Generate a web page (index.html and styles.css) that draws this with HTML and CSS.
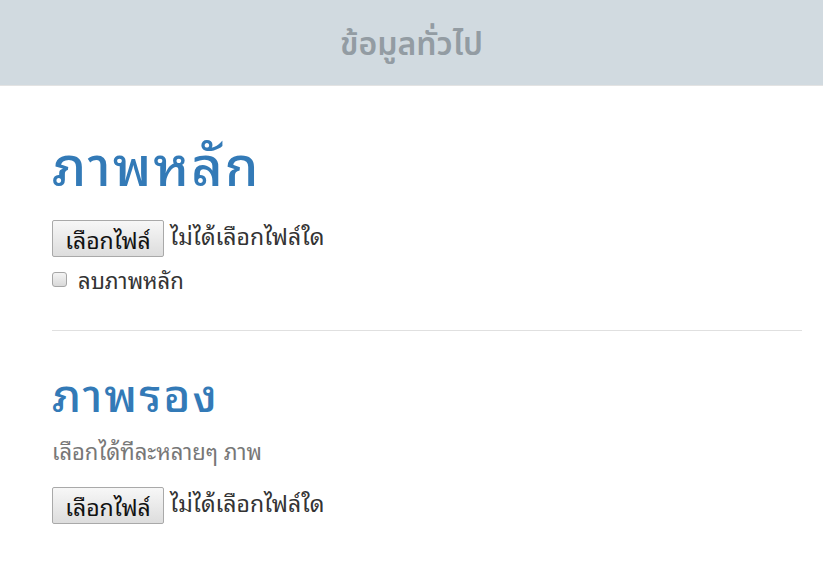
FILE: index.html
```html
<!DOCTYPE html>
<html lang="th">
<head>
    <meta charset="UTF-8">
    <title>ข้อมูลทั่วไป</title>
    <link rel="stylesheet" href="styles.css">
</head>
<body>
    <div class="page-header">
        <h3>ข้อมูลทั่วไป</h3>
    </div>

    <div class="container">
        <div class="section">
            <h1>ภาพหลัก</h1>
            <div class="file-input">
                <button type="button" class="file-btn">เลือกไฟล์</button>
                <span class="file-name">ไม่ได้เลือกไฟล์ใด</span>
            </div>
            <label class="checkbox">
                <input type="checkbox" name="remove_main">
                ลบภาพหลัก
            </label>
        </div>

        <hr>

        <div class="section">
            <h2>ภาพรอง</h2>
            <p class="help">เลือกได้ทีละหลายๆ ภาพ</p>
            <div class="file-input">
                <button type="button" class="file-btn">เลือกไฟล์</button>
                <span class="file-name">ไม่ได้เลือกไฟล์ใด</span>
            </div>
        </div>
    </div>
</body>
</html>
```

FILE: styles.css
```css
body {
    margin: 0;
    font-family: "Noto Sans Thai Looped", "Noto Sans", sans-serif;
    font-size: 22px;
    line-height: 1.4;
    color: #333;
    background: white;
}

.page-header {
    background: #d1dae0;
    height: 85px;
    border-bottom: 1px solid #e3e3e3;
    display: flex;
    align-items: center;
    justify-content: center;
}

.page-header h3 {
    margin: 0;
    padding-top: 6px;
    font-family: "Noto Sans Thai", "Noto Sans", sans-serif;
    font-size: 32px;
    font-weight: 600;
    color: #939ca3;
}

.container {
    padding: 0 21px 0 52px;
}

h1, h2 {
    color: #337ab7;
    font-weight: 500;
    line-height: 1.2;
    letter-spacing: 2px;
    margin: 0;
}

h1 {
    font-size: 54px;
    padding-top: 44px;
    margin-bottom: 25px;
}

h2 {
    font-size: 46px;
    padding-top: 33px;
    margin-bottom: 0;
}

.file-input {
    display: flex;
    align-items: flex-start;
    gap: 6px;
}

.file-btn {
    width: 112px;
    height: 37px;
    font-family: inherit;
    font-size: 23px;
    line-height: 1;
    color: #111;
    background: linear-gradient(#f7f7f7, #dddddd);
    border: 1px solid #a9a9a9;
    border-radius: 2px;
    padding: 0;
}

.file-name {
    font-size: 23px;
    line-height: 30px;
}

.checkbox {
    display: flex;
    align-items: center;
    gap: 11px;
    margin-top: 7px;
}

.checkbox input {
    appearance: none;
    width: 15px;
    height: 15px;
    margin: 0;
    border: 1px solid #a6a6a6;
    border-radius: 3px;
    background: linear-gradient(#f4f4f4, #d9d9d9);
}

hr {
    border: 0;
    border-top: 1px solid #e0e0e0;
    margin: 35px 0 0;
}

.help {
    color: #777;
    margin: 16px 0 21px;
}
```
